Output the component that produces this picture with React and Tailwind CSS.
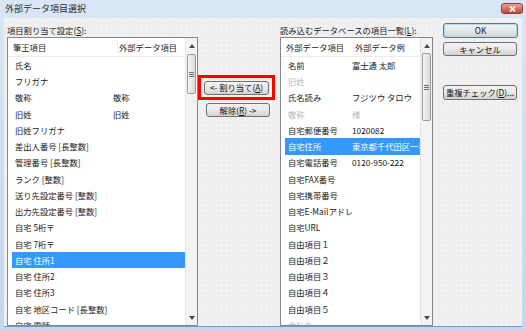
import React from "react";

const leftRows = [
  ["氏名", ""],
  ["フリガナ", ""],
  ["敬称", "敬称"],
  ["旧姓", "旧姓"],
  ["旧姓フリガナ", ""],
  ["差出人番号 [長整数]", ""],
  ["管理番号 [長整数]", ""],
  ["ランク [整数]", ""],
  ["送り先設定番号 [整数]", ""],
  ["出力先設定番号 [整数]", ""],
  ["自宅 5桁〒", ""],
  ["自宅 7桁〒", ""],
  ["自宅 住所1", "", "sel"],
  ["自宅 住所2", ""],
  ["自宅 住所3", ""],
  ["自宅 地区コード [長整数]", ""],
  ["自宅 電話", ""],
];

const rightRows = [
  ["名前", "富士通 太郎"],
  ["旧姓", "", "dim"],
  ["氏名読み", "フジツウ タロウ"],
  ["敬称", "様", "dim"],
  ["自宅郵便番号", "1020082"],
  ["自宅住所", "東京都千代田区一番町", "sel"],
  ["自宅電話番号", "0120-950-222"],
  ["自宅FAX番号", ""],
  ["自宅携帯番号", ""],
  ["自宅E-Mailアドレス", ""],
  ["自宅URL", ""],
  ["自由項目１", ""],
  ["自由項目２", ""],
  ["自由項目３", ""],
  ["自由項目４", ""],
  ["自由項目５", ""],
  ["会社名", "", "dim"],
];

const font = { fontFamily: '"Noto Sans CJK JP", "Noto Sans", sans-serif' };

const Arrow = ({ down }) => (
  <svg width="6" height="4" viewBox="0 0 6 4">
    {down ? (
      <path d="M0 0 L6 0 L3 4 Z" fill="#4a4a4a" />
    ) : (
      <path d="M0 4 L6 4 L3 0 Z" fill="#4a4a4a" />
    )}
  </svg>
);

const ScrollBar = ({ thumbTop, thumbHeight }) => (
  <div className="flex w-[12px] flex-col border-l border-[#e6e6e6] bg-[#f3f3f3]">
    <div className="flex h-[15px] items-center justify-center">
      <Arrow />
    </div>
    <div className="relative flex-1">
      <div
        className="absolute left-[1px] right-[1px] flex flex-col items-center justify-center gap-[1px] rounded-[2px] border border-[#9b9b9b] bg-gradient-to-r from-[#f6f6f6] to-[#d9d9d9]"
        style={{ top: thumbTop, height: thumbHeight }}
      >
        <div className="h-px w-[5px] bg-[#6f6f6f]" />
        <div className="h-px w-[5px] bg-[#6f6f6f]" />
        <div className="h-px w-[5px] bg-[#6f6f6f]" />
      </div>
    </div>
    <div className="flex h-[14px] items-center justify-center">
      <Arrow down />
    </div>
  </div>
);

const ListBox = ({ className, head1, head2, headCol, rowCol, rows, thumbTop, thumbHeight }) => (
  <div className={"flex h-[289px] border border-[#828790] bg-white " + className}>
    <div className="flex min-w-0 flex-1 flex-col overflow-hidden">
      <div className="flex h-[19px] shrink-0 items-center border-b border-[#ececec] pl-[5px] text-[#1e1e1e]">
        <div className={"shrink-0 border-r border-[#ececec] " + headCol}>{head1}</div>
        <div className="whitespace-nowrap pl-[1px]">{head2}</div>
      </div>
      <div className="flex flex-col pl-[4px]">
        {rows.map(([a, b, st], i) => (
          <div
            key={i}
            className={
              "flex h-[16.25px] shrink-0 items-center whitespace-nowrap pl-[3px] " +
              (st === "sel"
                ? "bg-[#3399ff] text-white"
                : st === "dim"
                ? "text-[#b8b8b8]"
                : "text-[#1a1a1a]")
            }
          >
            <div className={"shrink-0 overflow-hidden " + rowCol}>{a}</div>
            <div className="overflow-hidden">{b}</div>
          </div>
        ))}
      </div>
    </div>
    <ScrollBar thumbTop={thumbTop} thumbHeight={thumbHeight} />
  </div>
);

const Btn = ({ children, className }) => (
  <button
    type="button"
    className={
      "flex items-center justify-center rounded-[3px] border border-[#707070] bg-gradient-to-b from-[#f3f3f3] via-[#e9e9e9] to-[#d2d2d2] text-[8.3px] leading-none text-[#111] " +
      className
    }
  >
    {children}
  </button>
);

export default function App() {
  return (
    <div
      className="flex h-[331px] w-[526px] flex-col overflow-hidden bg-gradient-to-b from-[#d9e6f5] to-[#c3d6ed] text-[8.3px]"
      style={font}
    >
      <div className="flex h-[18px] shrink-0 items-start">
        <div className="pl-[5px] pt-[2px] text-[9px] text-[#2a2a2a]">外部データ項目選択</div>
        <div className="ml-auto mr-[3px] mt-[3px] flex h-[11px] w-[22px] items-center justify-center rounded-[3px] border border-[#8a3b33] bg-gradient-to-b from-[#e8a094] to-[#c0463a]">
          <svg width="7" height="6" viewBox="0 0 7 6">
            <path d="M1 0.5 L6 5.5 M6 0.5 L1 5.5" stroke="#fff" strokeWidth="1.6" />
          </svg>
        </div>
      </div>

      <div className="mx-[4px] mb-[4px] flex flex-1 border-b border-[#6d9bcd] bg-[#efefef] bg-[radial-gradient(#ffffff_0.7px,transparent_0.8px)] bg-[length:5px_5px] pl-[3px]">
        <div className="flex w-[191px] flex-col">
          <div className="h-[19px] pt-[6px] leading-[12px] text-[#1a1a1a]">
            項目割り当て設定(<u>S</u>):
          </div>
          <ListBox
            className="w-[191px]"
            head1="筆王項目"
            head2="外部データ項目"
            headCol="w-[105px]"
            rowCol="w-[98px]"
            rows={leftRows}
            thumbTop={1}
            thumbHeight={40}
          />
        </div>

        <div className="flex w-[82px] flex-col">
          <div className="mt-[57px] flex h-[25px] w-[77px] items-center justify-center border-[3px] border-[#ff0000]">
            <Btn className="h-[14px] w-[65px]">
              &lt;- 割り当て(<u>A</u>)
            </Btn>
          </div>
          <Btn className="ml-[8px] mt-[3px] h-[14px] w-[64px]">
            解除(<u>R</u>) -&gt;
          </Btn>
        </div>

        <div className="flex w-[153px] flex-col">
          <div className="h-[19px] pt-[6px] leading-[12px] text-[#1a1a1a]">
            読み込むデータベースの項目一覧(<u>L</u>):
          </div>
          <ListBox
            className="w-[153px]"
            head1="外部データ項目"
            head2="外部データ例"
            headCol="w-[68px]"
            rowCol="w-[64px]"
            rows={rightRows}
            thumbTop={0}
            thumbHeight={68}
          />
        </div>

        <div className="ml-[10px] flex w-[75px] flex-col">
          <Btn className="mt-[5px] h-[15px] w-[75px] border-[#3c7fb1] shadow-[inset_0_0_0_1px_#a8dcf7]">
            OK
          </Btn>
          <Btn className="mt-[4px] h-[14px] w-[74px]">キャンセル</Btn>
          <Btn className="mt-[29px] h-[15px] w-[74px]">
            重複チェック(<u>D</u>)...
          </Btn>
        </div>
      </div>
    </div>
  );
}
